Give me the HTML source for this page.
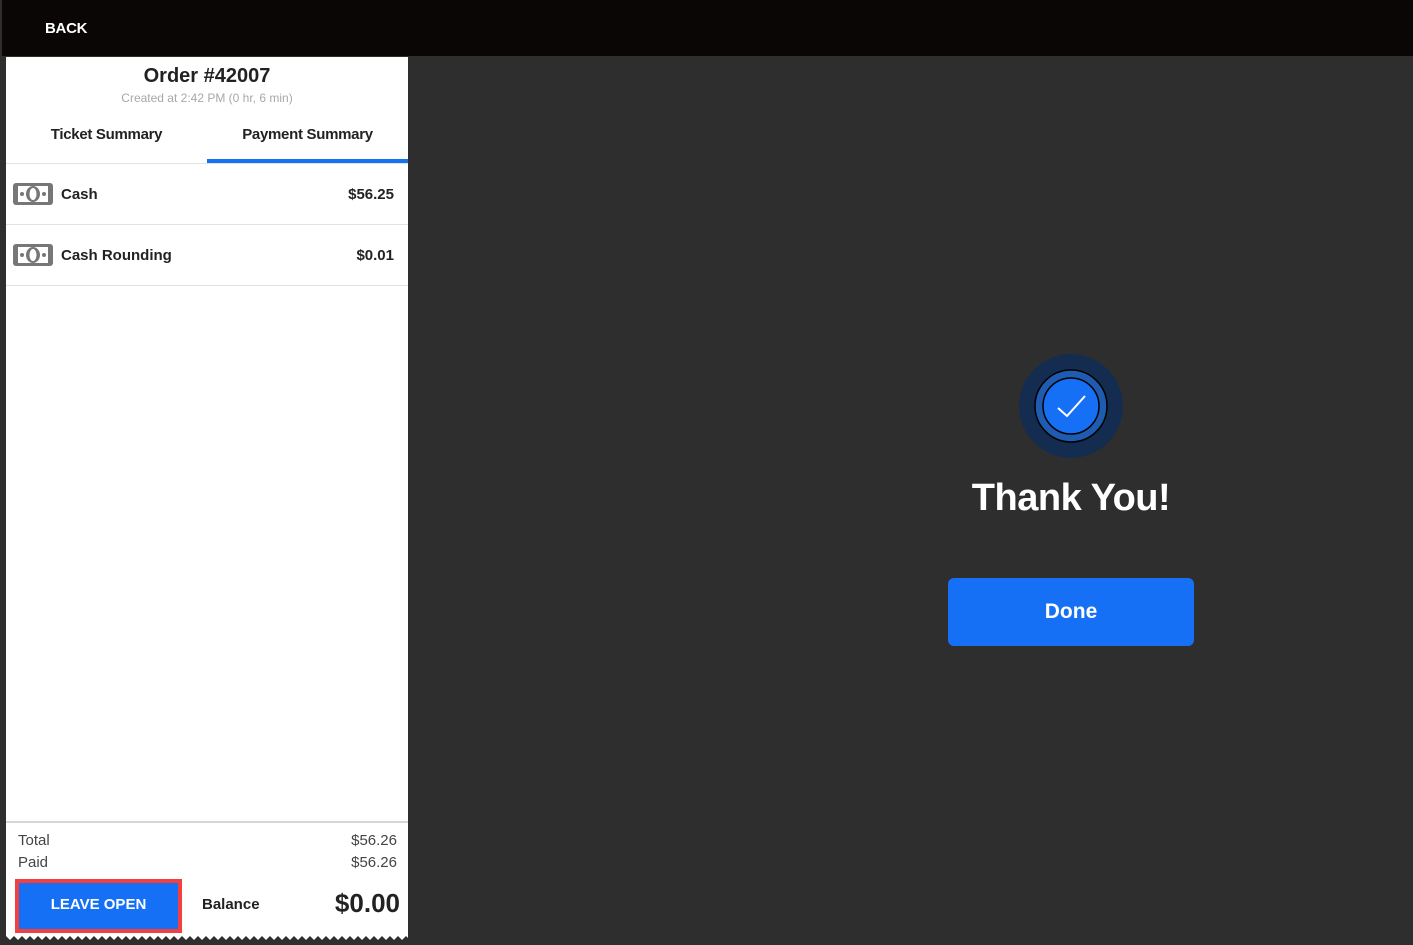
<!DOCTYPE html>
<html><head><meta charset="utf-8"><style>
*{margin:0;padding:0;box-sizing:border-box}
body{width:1413px;height:945px;background:#2e2e2e;font-family:"Liberation Sans",sans-serif;position:relative;overflow:hidden;color:#222}
.top{position:absolute;left:0;top:0;width:1413px;height:56px;background:#0a0606;border-left:2px solid #2e2e2e}
.back{position:absolute;left:43px;top:20px;color:#fff;font-weight:bold;font-size:15px;letter-spacing:-0.3px}
.panel{position:absolute;left:6px;top:57px;width:402px;height:883px;background:#fff}
.abs{position:absolute}
.row{position:absolute;left:0;width:402px;height:61px;border-bottom:1px solid #e2e2e2}
.row .lbl{position:absolute;left:55px;top:22px;font-size:15px;font-weight:bold;color:#222}
.row .amt{position:absolute;right:14px;top:22px;font-size:15px;font-weight:bold;color:#222}
.row svg{position:absolute;left:7px;top:19px}
</style></head><body>
<div class="top"><div class="back">BACK</div></div>
<div class="panel">
 <div class="abs" style="left:0;width:402px;top:8px;text-align:center;font-size:20px;font-weight:bold;color:#222">Order #42007</div>
 <div class="abs" style="left:0;width:402px;top:34px;text-align:center;font-size:12px;color:#a8a8a8">Created at 2:42 PM (0 hr, 6 min)</div>
 <div class="abs" style="left:0;width:201px;top:69px;text-align:center;font-size:15px;font-weight:bold;letter-spacing:-0.3px">Ticket Summary</div>
 <div class="abs" style="left:201px;width:201px;top:69px;text-align:center;font-size:15px;font-weight:bold;letter-spacing:-0.3px">Payment Summary</div>
 <div class="abs" style="left:0;top:106px;width:402px;height:1px;background:#e2e2e2"></div>
 <div class="abs" style="left:201px;top:102px;width:201px;height:4px;background:#1570f5"></div>
 <div class="row" style="top:107px"><svg width="40" height="22" viewBox="0 0 40 22"><rect x="0" y="0" width="40" height="22" rx="3" fill="#777"/><rect x="3" y="3" width="34" height="16" rx="1" fill="#fff"/><ellipse cx="20" cy="11" rx="7" ry="8" fill="#777"/><ellipse cx="20" cy="11" rx="3.5" ry="6" fill="#fff"/><rect x="3" y="3" width="2" height="16" fill="#777"/><rect x="35" y="3" width="2" height="16" fill="#777"/><circle cx="9" cy="11" r="2" fill="#777"/><circle cx="31" cy="11" r="2" fill="#777"/></svg><div class="lbl">Cash</div><div class="amt">$56.25</div></div>
 <div class="row" style="top:168px"><svg width="40" height="22" viewBox="0 0 40 22"><rect x="0" y="0" width="40" height="22" rx="3" fill="#777"/><rect x="3" y="3" width="34" height="16" rx="1" fill="#fff"/><ellipse cx="20" cy="11" rx="7" ry="8" fill="#777"/><ellipse cx="20" cy="11" rx="3.5" ry="6" fill="#fff"/><rect x="3" y="3" width="2" height="16" fill="#777"/><rect x="35" y="3" width="2" height="16" fill="#777"/><circle cx="9" cy="11" r="2" fill="#777"/><circle cx="31" cy="11" r="2" fill="#777"/></svg><div class="lbl">Cash Rounding</div><div class="amt">$0.01</div></div>
 <div class="abs" style="left:0;top:764px;width:402px;height:2px;background:#d6d6d6"></div>
 <div class="abs" style="left:12px;top:775px;font-size:15px;color:#444">Total</div>
 <div class="abs" style="right:11px;top:775px;font-size:15px;color:#444">$56.26</div>
 <div class="abs" style="left:12px;top:797px;font-size:15px;color:#444">Paid</div>
 <div class="abs" style="right:11px;top:797px;font-size:15px;color:#444">$56.26</div>
 <div class="abs" style="left:9px;top:822px;width:167px;height:54px;background:#1570f5;border:4px solid #f04040;color:#fff;font-weight:bold;font-size:15px;text-align:center;line-height:44px">LEAVE OPEN</div>
 <div class="abs" style="left:196px;top:839px;font-size:15px;font-weight:bold">Balance</div>
 <div class="abs" style="right:8px;top:831px;font-size:26px;font-weight:bold">$0.00</div>
</div>
<svg class="abs" style="left:6px;top:936px" width="402" height="9" viewBox="0 0 402 9"><rect width="402" height="9" fill="#2e2e2e"/><defs><pattern id="zz" width="8" height="9" patternUnits="userSpaceOnUse"><polygon points="0,0 8,0 4,4" fill="#fff"/></pattern></defs><rect width="402" height="9" fill="url(#zz)"/></svg>
<svg class="abs" style="left:1019px;top:354px" width="104" height="104" viewBox="0 0 104 104"><circle cx="52" cy="52" r="52" fill="#142c50"/><circle cx="52" cy="52" r="36" fill="#1f5bb0" stroke="#000" stroke-width="1.5"/><circle cx="52" cy="52" r="28" fill="#1570f5" stroke="#000" stroke-width="1.5"/><path d="M39 54 L48 62 L66 42" fill="none" stroke="#fff" stroke-width="2"/></svg>
<div class="abs" style="left:920px;width:302px;top:477px;text-align:center;color:#fff;font-size:38px;font-weight:bold;letter-spacing:-0.5px">Thank You!</div>
<div class="abs" style="left:948px;top:578px;width:246px;height:68px;background:#1570f5;border-radius:6px;color:#fff;font-size:21px;font-weight:bold;text-align:center;line-height:68px">Done</div>
</body></html>
